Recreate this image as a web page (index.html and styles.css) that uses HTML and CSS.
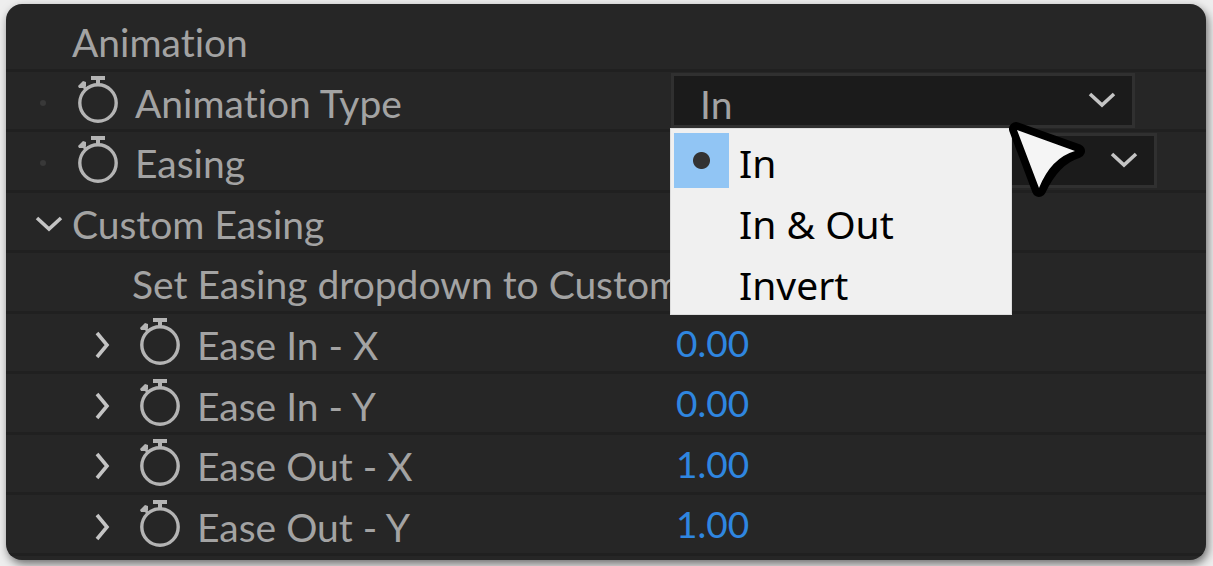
FILE: index.html
```html
<!DOCTYPE html>
<html lang="en">
<head>
    <meta charset="UTF-8">
    <meta name="viewport" content="width=device-width, initial-scale=1.0">
    <title>Animation Controls</title>
    <link rel="stylesheet" href="styles.css">
</head>
<body>
    <svg class="symbols" aria-hidden="true">
        <symbol id="stopwatch" viewBox="0 0 42 50">
            <circle cx="21" cy="29" r="18.2" fill="none" stroke="currentColor" stroke-width="3.4"/>
            <path d="M14 2h14v4h-5v6h-4v-6h-5z" fill="currentColor"/>
            <path d="M1 12l5-5 3 1v4l-2 2-5 0z" fill="currentColor"/>
            <path d="M5 11l5 5" stroke="currentColor" stroke-width="3"/>
        </symbol>
        <symbol id="chevron-down" viewBox="0 0 28 16">
            <path d="M2 2l12 11L26 2" fill="none" stroke="currentColor" stroke-width="3.6"/>
        </symbol>
        <symbol id="chevron-right" viewBox="0 0 16 28">
            <path d="M2 2l10 12L2 26" fill="none" stroke="currentColor" stroke-width="3.6"/>
        </symbol>
    </svg>

    <main class="panel">
        <div class="row">
            <div class="name group">Animation</div>
        </div>
        <div class="row">
            <div class="name property">
                <span class="dot"></span>
                <button class="watch" aria-label="Animate Animation Type"><svg><use href="#stopwatch"/></svg></button>
                <label for="type">Animation Type</label>
            </div>
            <div class="value">
                <div class="dropdown">
                    <select id="type">
                        <option>In</option>
                        <option>In &amp; Out</option>
                        <option>Invert</option>
                    </select>
                    <svg class="arrow"><use href="#chevron-down"/></svg>
                </div>
                <div class="menu">
                    <label class="item"><input type="radio" name="choice" checked><span>In</span></label>
                    <label class="item"><input type="radio" name="choice"><span>In &amp; Out</span></label>
                    <label class="item"><input type="radio" name="choice"><span>Invert</span></label>
                </div>
                <svg class="cursor" viewBox="0 0 78 78" aria-hidden="true">
                    <path d="M8 8L70 30Q46 37 31 69Z" fill="#000" stroke="#000" stroke-width="14" stroke-linejoin="round"/>
                    <path d="M9 9L67 30Q43 37 31 67Z" fill="#f5f5f5"/>
                </svg>
            </div>
        </div>
        <div class="row">
            <div class="name property">
                <span class="dot"></span>
                <button class="watch" aria-label="Animate Easing"><svg><use href="#stopwatch"/></svg></button>
                <label for="easing">Easing</label>
            </div>
            <div class="value">
                <div class="dropdown wide">
                    <select id="easing"><option></option></select>
                    <svg class="arrow"><use href="#chevron-down"/></svg>
                </div>
            </div>
        </div>
        <div class="row">
            <div class="name open">
                <button class="twirl down" aria-label="Collapse Custom Easing"><svg><use href="#chevron-down"/></svg></button>
                Custom Easing
            </div>
        </div>
        <div class="row">
            <div class="name note">Set Easing dropdown to Custom</div>
        </div>
        <div class="row">
            <div class="name child">
                <button class="twirl" aria-label="Expand Ease In - X"><svg><use href="#chevron-right"/></svg></button>
                <button class="watch" aria-label="Animate Ease In - X"><svg><use href="#stopwatch"/></svg></button>
                <label for="in-x">Ease In - X</label>
            </div>
            <div class="value"><input class="number" type="text" id="in-x" value="0.00"></div>
        </div>
        <div class="row">
            <div class="name child">
                <button class="twirl" aria-label="Expand Ease In - Y"><svg><use href="#chevron-right"/></svg></button>
                <button class="watch" aria-label="Animate Ease In - Y"><svg><use href="#stopwatch"/></svg></button>
                <label for="in-y">Ease In - Y</label>
            </div>
            <div class="value"><input class="number" type="text" id="in-y" value="0.00"></div>
        </div>
        <div class="row">
            <div class="name child">
                <button class="twirl" aria-label="Expand Ease Out - X"><svg><use href="#chevron-right"/></svg></button>
                <button class="watch" aria-label="Animate Ease Out - X"><svg><use href="#stopwatch"/></svg></button>
                <label for="out-x">Ease Out - X</label>
            </div>
            <div class="value"><input class="number" type="text" id="out-x" value="1.00"></div>
        </div>
        <div class="row">
            <div class="name child">
                <button class="twirl" aria-label="Expand Ease Out - Y"><svg><use href="#chevron-right"/></svg></button>
                <button class="watch" aria-label="Animate Ease Out - Y"><svg><use href="#stopwatch"/></svg></button>
                <label for="out-y">Ease Out - Y</label>
            </div>
            <div class="value"><input class="number" type="text" id="out-y" value="1.00"></div>
        </div>
    </main>
</body>
</html>
```
FILE: styles.css
```css
* {
    box-sizing: border-box;
}
body {
    display: flex;
    min-height: 100vh;
    margin: 0;
    padding: 4px 7px 6px 6px;
    background-color: #eee;
    font-family: Lato, sans-serif;
    font-size: 39px;
    font-variant-ligatures: none;
    line-height: 48px;
    color: #a3a3a3;
}
.symbols {
    position: absolute;
    width: 0;
    height: 0;
}
button, input, select {
    margin: 0;
    padding: 0;
    border: none;
    background: none;
    color: inherit;
    font: inherit;
}
svg {
    display: block;
}
.panel {
    flex: 1;
    display: grid;
    grid-auto-rows: minmax(60px, 1fr);
    padding: 7px 0 4px;
    background-color: #262626;
    border-radius: 16px;
    box-shadow: 2px 4px 10px rgba(0, 0, 0, 0.55);
    overflow: hidden;
}
.row {
    display: grid;
    grid-template-columns: 664px 1fr;
    align-items: center;
    border-bottom: 3px solid #202020;
}
.name {
    display: flex;
    align-items: center;
    padding-top: 5px;
    white-space: nowrap;
}
.group {
    padding-left: 66px;
}
.note {
    padding-left: 126px;
}
.open {
    padding-left: 29px;
}
.property {
    padding-left: 34px;
}
.child {
    padding-left: 89px;
}
.dot {
    width: 6px;
    height: 6px;
    margin-right: 31px;
    border-radius: 50%;
    background-color: #383838;
}
.watch {
    margin-right: 16px;
    color: #b4b4b4;
}
.watch svg {
    width: 42px;
    height: 50px;
    margin-top: -8px;
}
.twirl {
    margin-right: 28px;
    color: #c4c4c4;
}
.twirl svg {
    width: 16px;
    height: 28px;
}
.twirl.down {
    margin-right: 9px;
}
.twirl.down svg {
    width: 28px;
    height: 16px;
}
.value {
    position: relative;
    align-self: stretch;
    display: flex;
    align-items: center;
    padding-left: 1px;
}
.dropdown {
    position: relative;
    width: 464px;
}
.dropdown.wide {
    width: 486px;
}
.dropdown select {
    display: block;
    width: 100%;
    height: 55px;
    padding: 4px 26px 0;
    border: 3px solid #303030;
    background-color: #1b1b1b;
    appearance: none;
}
.arrow {
    position: absolute;
    top: 19px;
    right: 19px;
    width: 28px;
    height: 16px;
    color: #c4c4c4;
    pointer-events: none;
}
.menu {
    position: absolute;
    z-index: 1;
    top: 56px;
    left: 0;
    width: 342px;
    padding: 1px 3px;
    border: 1px solid #ddd;
    background-color: #f0f0f0;
    font-family: "Noto Sans", sans-serif;
    font-size: 39px;
    color: #000;
}
.item {
    display: flex;
    align-items: center;
    height: 61px;
}
.item span {
    padding-top: 6px;
}
.item input {
    width: 55px;
    height: 55px;
    margin-right: 10px;
    appearance: none;
}
.item input:checked {
    background: radial-gradient(circle, #333 8px, #91c5f4 9px);
}
.cursor {
    position: absolute;
    z-index: 2;
    top: 49px;
    left: 338px;
    width: 78px;
    height: 78px;
}
.number {
    width: 120px;
    padding-left: 5px;
    font-size: 37px;
    color: #2f86e0;
}
```
